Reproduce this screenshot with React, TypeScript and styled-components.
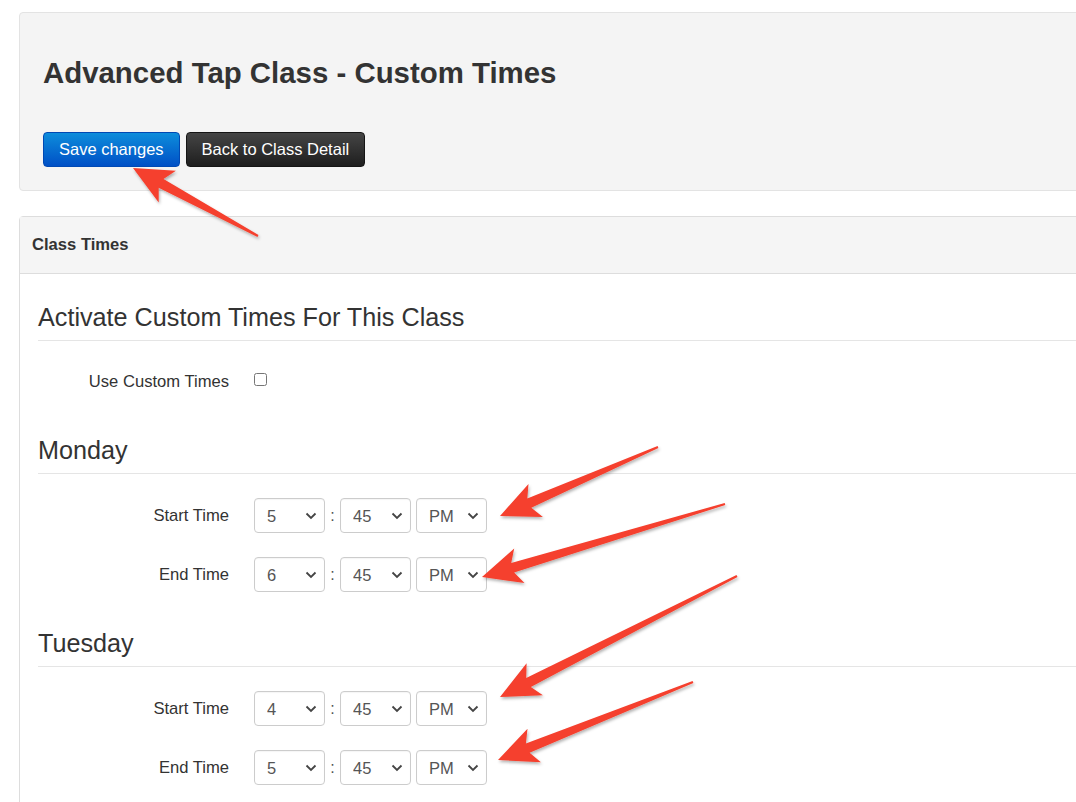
import React from 'react';
import styled, { createGlobalStyle } from 'styled-components';

const GlobalStyle = createGlobalStyle`
  html, body {
    margin: 0;
    padding: 0;
    background: #fff;
    overflow: hidden;
  }
  body {
    font-family: 'Liberation Sans', Arial, sans-serif;
    color: #333;
  }
`;

const Page = styled.div`
  position: relative;
  width: 1076px;
  height: 802px;
  overflow: hidden;
  padding: 12px 0 0 19px;
  box-sizing: border-box;
`;

const Content = styled.div`
  width: 1150px;
`;

const TopPanel = styled.div`
  background: #f4f4f4;
  border: 1px solid #e3e3e3;
  border-radius: 4px;
  padding: 44px 23px 23px;
`;

const Title = styled.h1`
  margin: 0 0 44px;
  font-size: 29.4px;
  line-height: 31px;
  font-weight: bold;
  color: #333;
`;

const ButtonBar = styled.div`
  display: flex;
  gap: 6px;
`;

const Button = styled.button<{ $variant: 'primary' | 'dark' }>`
  height: 35px;
  padding: 0 15px;
  border-radius: 4px;
  font-family: 'Liberation Sans', Arial, sans-serif;
  font-size: 16.5px;
  color: #fff;
  cursor: pointer;
  border: 1px solid ${(p) => (p.$variant === 'primary' ? '#0049b4' : '#151515')};
  background: ${(p) =>
    p.$variant === 'primary'
      ? 'linear-gradient(to bottom, #0d8ddb 0%, #0050c6 100%)'
      : 'linear-gradient(to bottom, #454545 0%, #1e1e1e 100%)'};
`;

const Panel = styled.div`
  margin-top: 25px;
  border: 1px solid #ddd;
  border-radius: 4px;
  background: #fff;
  min-height: 700px;
`;

const PanelHeader = styled.div`
  height: 56px;
  display: flex;
  align-items: center;
  padding: 0 12px;
  background: #f5f5f5;
  border-bottom: 1px solid #ddd;
  font-size: 16.6px;
  font-weight: bold;
  color: #333;
`;

const PanelBody = styled.div`
  padding: 30px 0 0 18px;
`;

const SectionHeading = styled.h3<{ $top?: number }>`
  margin: ${(p) => p.$top ?? 0}px 0 0;
  font-size: 25.2px;
  line-height: 26px;
  font-weight: normal;
  padding-bottom: 10px;
  border-bottom: 1px solid #e5e5e5;
  color: #333;
`;

const FormRow = styled.div<{ $top: number }>`
  display: grid;
  grid-template-columns: 191px auto;
  column-gap: 25px;
  align-items: center;
  height: 35px;
  margin-top: ${(p) => p.$top}px;
`;

const FieldLabel = styled.label`
  text-align: right;
  font-size: 16.6px;
  color: #333;
  padding-top: 1px;
`;

const Checkbox = styled.input`
  width: 13px;
  height: 13px;
  margin: 0 0 5px 0;
  justify-self: start;
`;

const TimeGroup = styled.div`
  display: flex;
  align-items: center;
`;

const Colon = styled.span`
  width: 15px;
  text-align: center;
  font-size: 16px;
  color: #555;
`;

const SelectWrap = styled.div<{ $gap?: number }>`
  position: relative;
  width: 71px;
  height: 35px;
  margin-left: ${(p) => p.$gap ?? 0}px;
`;

const NativeSelect = styled.select`
  appearance: none;
  width: 100%;
  height: 100%;
  box-sizing: border-box;
  border: 1px solid #ccc;
  border-radius: 4px;
  background: #fff;
  padding: 0 0 0 12px;
  font-family: 'Liberation Sans', Arial, sans-serif;
  font-size: 16.5px;
  color: #555;
  box-shadow: inset 0 1px 1px rgba(0, 0, 0, 0.04);
`;

const Chevron = styled.svg`
  position: absolute;
  right: 8px;
  top: 14px;
  pointer-events: none;
`;

const Annotations = styled.svg`
  position: absolute;
  left: 0;
  top: 0;
  pointer-events: none;
`;

function Select({ value, options, gap }: { value: string; options: string[]; gap?: number }) {
  return (
    <SelectWrap $gap={gap}>
      <NativeSelect defaultValue={value}>
        {options.map((o) => (
          <option key={o}>{o}</option>
        ))}
      </NativeSelect>
      <Chevron width="12" height="8" viewBox="0 0 12 8">
        <path d="M1.5 1.5 L6 6 L10.5 1.5" stroke="#444" strokeWidth="1.8" fill="none" />
      </Chevron>
    </SelectWrap>
  );
}

const hours = Array.from({ length: 12 }, (_, i) => String(i + 1));
const minutes = ['00', '15', '30', '45'];

function TimeRow({ label, hour, minute, ampm, top }: { label: string; hour: string; minute: string; ampm: string; top: number }) {
  return (
    <FormRow $top={top}>
      <FieldLabel>{label}</FieldLabel>
      <TimeGroup>
        <Select value={hour} options={hours} />
        <Colon>:</Colon>
        <Select value={minute} options={minutes} />
        <Select value={ampm} options={['AM', 'PM']} gap={5} />
      </TimeGroup>
    </FormRow>
  );
}

// tapered annotation arrow: thin tail, wider neck, triangular head
function arrowPoints(tx: number, ty: number, hx: number, hy: number) {
  const dx = hx - tx;
  const dy = hy - ty;
  const len = Math.hypot(dx, dy);
  const ux = dx / len;
  const uy = dy / len;
  const nx = -uy;
  const ny = ux;
  const headLen = 39;
  const headHalf = 18;
  const neckHalf = 5;
  const tailHalf = 1;
  const bx = hx - ux * headLen;
  const by = hy - uy * headLen;
  const kx = bx + ux * 7;
  const ky = by + uy * 7;
  const pts = [
    [tx + nx * tailHalf, ty + ny * tailHalf],
    [kx + nx * neckHalf, ky + ny * neckHalf],
    [bx + nx * headHalf, by + ny * headHalf],
    [hx, hy],
    [bx - nx * headHalf, by - ny * headHalf],
    [kx - nx * neckHalf, ky - ny * neckHalf],
    [tx - nx * tailHalf, ty - ny * tailHalf],
  ];
  return pts.map((p) => p.map((v) => v.toFixed(1)).join(',')).join(' ');
}

const arrows = [
  [258, 236, 133, 168],
  [658, 447, 500, 516],
  [725, 504, 482, 577],
  [737, 576, 500, 697],
  [693, 682, 498, 760],
];

export default function App() {
  return (
    <>
      <GlobalStyle />
      <Page>
        <Content>
          <TopPanel>
            <Title>Advanced Tap Class - Custom Times</Title>
            <ButtonBar>
              <Button $variant="primary">Save changes</Button>
              <Button $variant="dark">Back to Class Detail</Button>
            </ButtonBar>
          </TopPanel>

          <Panel>
            <PanelHeader>Class Times</PanelHeader>
            <PanelBody>
              <SectionHeading>Activate Custom Times For This Class</SectionHeading>
              <FormRow $top={23}>
                <FieldLabel>Use Custom Times</FieldLabel>
                <Checkbox type="checkbox" />
              </FormRow>

              <SectionHeading $top={38}>Monday</SectionHeading>
              <TimeRow label="Start Time" hour="5" minute="45" ampm="PM" top={24} />
              <TimeRow label="End Time" hour="6" minute="45" ampm="PM" top={24} />

              <SectionHeading $top={38}>Tuesday</SectionHeading>
              <TimeRow label="Start Time" hour="4" minute="45" ampm="PM" top={24} />
              <TimeRow label="End Time" hour="5" minute="45" ampm="PM" top={24} />
            </PanelBody>
          </Panel>
        </Content>

        <Annotations width="1076" height="802" viewBox="0 0 1076 802">
          <defs>
            <filter id="arrowShadow" x="-20%" y="-20%" width="140%" height="140%">
              <feDropShadow dx="1" dy="2" stdDeviation="1.5" floodColor="#000" floodOpacity="0.3" />
            </filter>
          </defs>
          {arrows.map(([tx, ty, hx, hy], i) => (
            <polygon key={i} points={arrowPoints(tx, ty, hx, hy)} fill="#f53f2d" filter="url(#arrowShadow)" />
          ))}
        </Annotations>
      </Page>
    </>
  );
}
